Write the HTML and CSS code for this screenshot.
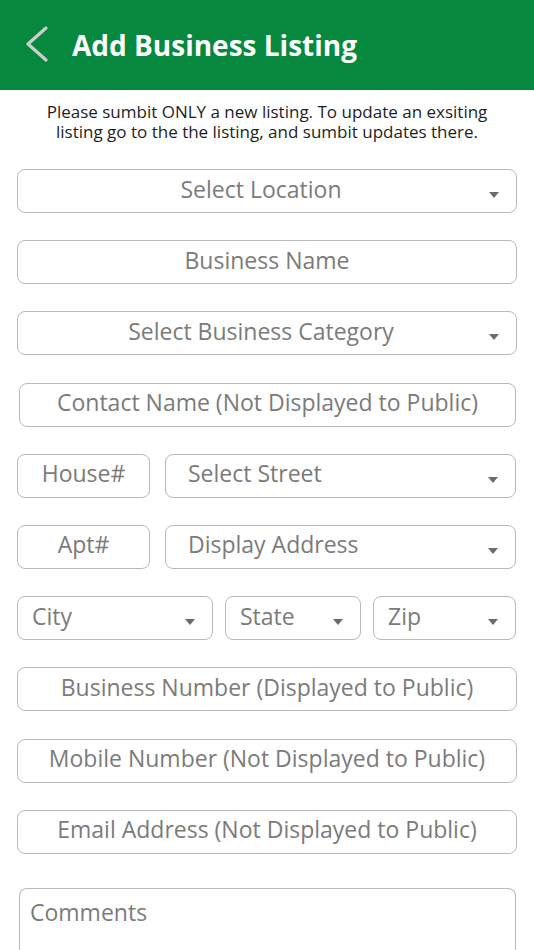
FILE: index.html
```html
<!DOCTYPE html>
<html>
<head>
<meta charset="utf-8">
<link rel="stylesheet" href="styles.css">
</head>
<body>
<header class="topbar">
  <svg class="back" width="30" height="40" viewBox="0 0 30 40"><path d="M24 3 L6 19 L24 35" fill="none" stroke="#cdcdcd" stroke-width="3.2" stroke-linecap="round" stroke-linejoin="round"/></svg>
  <h1 class="title">Add Business Listing</h1>
</header>
<p class="notice">Please sumbit ONLY a new listing. To update an exsiting listing go to the the listing, and sumbit updates there.</p>
<main class="form">
  <div class="field select center"><span>Select Location</span><i class="caret"></i></div>
  <div class="field center"><span>Business Name</span></div>
  <div class="field select center"><span>Select Business Category</span><i class="caret"></i></div>
  <div class="field center inset"><span>Contact Name (Not Displayed to Public)</span></div>
  <div class="row">
    <div class="field center small"><span>House#</span></div>
    <div class="field select left wide"><span>Select Street</span><i class="caret"></i></div>
  </div>
  <div class="row">
    <div class="field center small"><span>Apt#</span></div>
    <div class="field select left wide"><span>Display Address</span><i class="caret"></i></div>
  </div>
  <div class="row row3">
    <div class="field select tight city"><span>City</span><i class="caret"></i></div>
    <div class="field select tight state"><span>State</span><i class="caret"></i></div>
    <div class="field select tight zip"><span>Zip</span><i class="caret"></i></div>
  </div>
  <div class="field center"><span>Business Number (Displayed to Public)</span></div>
  <div class="field center"><span>Mobile Number (Not Displayed to Public)</span></div>
  <div class="field center"><span>Email Address (Not Displayed to Public)</span></div>
  <div class="field area inset"><span>Comments</span></div>
</main>
</body>
</html>
```
FILE: styles.css
```css
* { box-sizing: border-box; }
html, body { margin: 0; padding: 0; background: #fff; }
body {
  font-family: "Open Sans", "Noto Sans", sans-serif;
  width: 534px;
  height: 950px;
  overflow: hidden;
}
.topbar {
  height: 90px;
  background: #07883f;
  display: flex;
  align-items: center;
  padding-left: 22px;
}
.back { flex: none; margin-right: 20px; margin-top: 0; }
.title {
  margin: 0;
  color: #fff;
  font-size: 28px;
  font-weight: 700;
  letter-spacing: 0;
}
.notice {
  margin: 12px 30px 0;
  text-align: center;
  color: #1e1e1e;
  font-size: 17px;
  line-height: 20px;
}
.form {
  padding: 27px 17px 0 17px;
  display: flex;
  flex-direction: column;
  gap: 27.2px;
}
.field {
  height: 44px;
  border: 1px solid #b9b9b9;
  border-radius: 8px;
  display: flex;
  align-items: center;
  position: relative;
  color: #7b7b7b;
  font-size: 23px;
  background: #fff;
}
.field span { line-height: 1; padding-bottom: 4px; }
.center { justify-content: center; }
.select.center span { margin-right: 12px; }
.left { padding-left: 22px; }
.tight { padding-left: 14px; }
.inset { margin: 0 1px 0 2px; }
.caret {
  position: absolute;
  right: 17px;
  top: 22px;
  width: 0;
  height: 0;
  border-left: 5.5px solid transparent;
  border-right: 5.5px solid transparent;
  border-top: 6px solid #6b6b6b;
}
.row { display: flex; gap: 15px; }
.small { width: 133px; flex: none; }
.wide { flex: 1; margin-right: 1px; }
.row3 { gap: 12px; }
.city { width: 196px; flex: none; }
.state { width: 136px; flex: none; }
.zip { flex: 1; margin-right: 1px; }
.area {
  height: 62px;
  align-items: flex-start;
  padding: 12px 10px;
  margin-top: 7px;
  border-bottom: 0;
  border-radius: 8px 8px 0 0;
}
```
